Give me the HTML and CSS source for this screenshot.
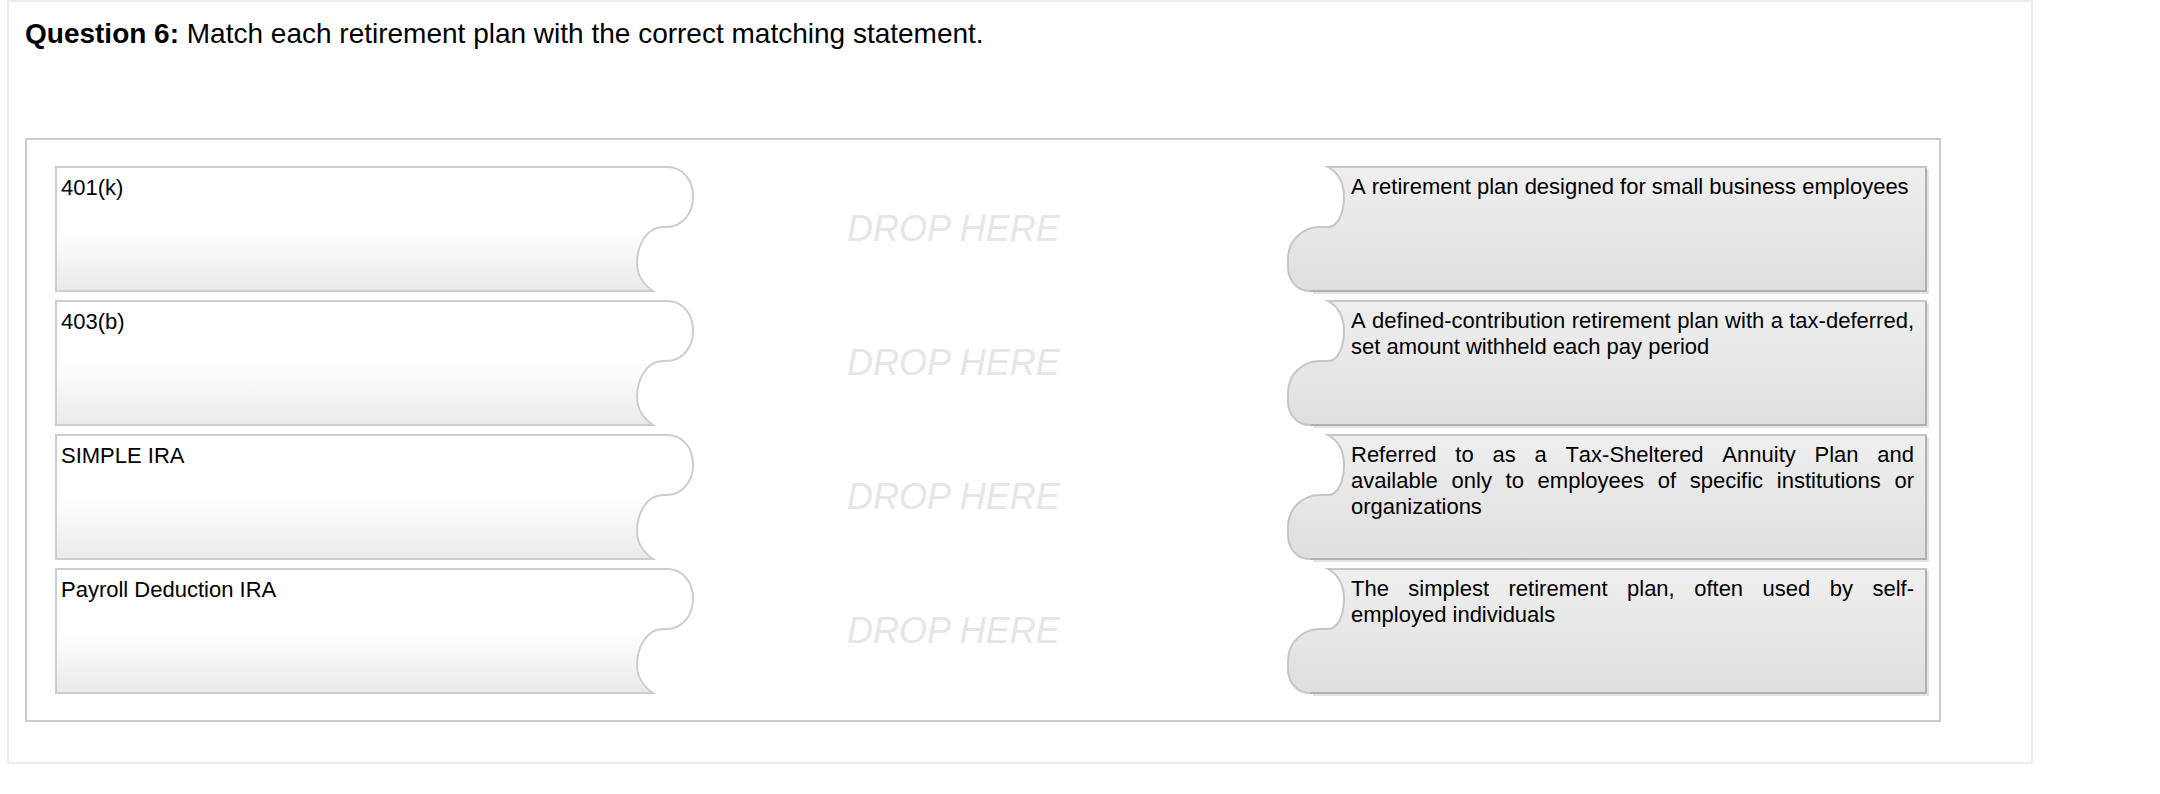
FILE: index.html
```html
<!DOCTYPE html>
<html>
<head>
<meta charset="utf-8">
<link rel="stylesheet" href="styles.css">
</head>
<body>
<div class="question">
  <div class="prompt"><b>Question 6:</b> Match each retirement plan with the correct matching statement.</div>
  <div class="board">
    <div class="row">
      <div class="piece piece-left">
        <svg class="shape" width="639" height="126" viewBox="0 0 639 126"><defs><linearGradient id="gl1" x1="0" y1="0" x2="0" y2="1"><stop offset="0" stop-color="#fff"/><stop offset="0.5" stop-color="#fff"/><stop offset="1" stop-color="#eaeaea"/></linearGradient></defs><path d="M1,1 H612 C628,1 638,14 638,31 C638,48 627,61 611,61 H608 C592,61 582,79 582,97 C582,109 589,119 598,125 H1 Z" fill="url(#gl1)" stroke="#cdcdcd" stroke-width="2"/></svg>
        <div class="label">401(k)</div>
      </div>
      <div class="drop">DROP HERE</div>
      <div class="piece piece-right">
        <svg class="shape" width="640" height="126" viewBox="0 0 640 126"><defs><linearGradient id="gr1" x1="0" y1="0" x2="0" y2="1"><stop offset="0" stop-color="#efefef"/><stop offset="1" stop-color="#dfdfdf"/></linearGradient></defs><path d="M41,1 H639 V125 H22 C10,125 1,114 1,101 V93 C1,75 15,61 33,61 H41 C51,61 57,47 57,31 C57,16 50,6 41,1 Z" fill="url(#gr1)" stroke="#c6c6c6" stroke-width="2"/><path d="M639,2 V125 H24" fill="none" stroke="#b0b0b0" stroke-width="2"/><path d="M26,127 H641 V3" fill="none" stroke="#dcdcdc" stroke-width="1.5"/></svg>
        <p class="text">A retirement plan designed for small business employees</p>
      </div>
    </div>
    <div class="row">
      <div class="piece piece-left">
        <svg class="shape" width="639" height="126" viewBox="0 0 639 126"><defs><linearGradient id="gl2" x1="0" y1="0" x2="0" y2="1"><stop offset="0" stop-color="#fff"/><stop offset="0.5" stop-color="#fff"/><stop offset="1" stop-color="#eaeaea"/></linearGradient></defs><path d="M1,1 H612 C628,1 638,14 638,31 C638,48 627,61 611,61 H608 C592,61 582,79 582,97 C582,109 589,119 598,125 H1 Z" fill="url(#gl2)" stroke="#cdcdcd" stroke-width="2"/></svg>
        <div class="label">403(b)</div>
      </div>
      <div class="drop">DROP HERE</div>
      <div class="piece piece-right">
        <svg class="shape" width="640" height="126" viewBox="0 0 640 126"><defs><linearGradient id="gr2" x1="0" y1="0" x2="0" y2="1"><stop offset="0" stop-color="#efefef"/><stop offset="1" stop-color="#dfdfdf"/></linearGradient></defs><path d="M41,1 H639 V125 H22 C10,125 1,114 1,101 V93 C1,75 15,61 33,61 H41 C51,61 57,47 57,31 C57,16 50,6 41,1 Z" fill="url(#gr2)" stroke="#c6c6c6" stroke-width="2"/><path d="M639,2 V125 H24" fill="none" stroke="#b0b0b0" stroke-width="2"/><path d="M26,127 H641 V3" fill="none" stroke="#dcdcdc" stroke-width="1.5"/></svg>
        <p class="text">A defined-contribution retirement plan with a tax-deferred, set amount withheld each pay period</p>
      </div>
    </div>
    <div class="row">
      <div class="piece piece-left">
        <svg class="shape" width="639" height="126" viewBox="0 0 639 126"><defs><linearGradient id="gl3" x1="0" y1="0" x2="0" y2="1"><stop offset="0" stop-color="#fff"/><stop offset="0.5" stop-color="#fff"/><stop offset="1" stop-color="#eaeaea"/></linearGradient></defs><path d="M1,1 H612 C628,1 638,14 638,31 C638,48 627,61 611,61 H608 C592,61 582,79 582,97 C582,109 589,119 598,125 H1 Z" fill="url(#gl3)" stroke="#cdcdcd" stroke-width="2"/></svg>
        <div class="label">SIMPLE IRA</div>
      </div>
      <div class="drop">DROP HERE</div>
      <div class="piece piece-right">
        <svg class="shape" width="640" height="126" viewBox="0 0 640 126"><defs><linearGradient id="gr3" x1="0" y1="0" x2="0" y2="1"><stop offset="0" stop-color="#efefef"/><stop offset="1" stop-color="#dfdfdf"/></linearGradient></defs><path d="M41,1 H639 V125 H22 C10,125 1,114 1,101 V93 C1,75 15,61 33,61 H41 C51,61 57,47 57,31 C57,16 50,6 41,1 Z" fill="url(#gr3)" stroke="#c6c6c6" stroke-width="2"/><path d="M639,2 V125 H24" fill="none" stroke="#b0b0b0" stroke-width="2"/><path d="M26,127 H641 V3" fill="none" stroke="#dcdcdc" stroke-width="1.5"/></svg>
        <p class="text">Referred to as a Tax-Sheltered Annuity Plan and available only to employees of specific institutions or organizations</p>
      </div>
    </div>
    <div class="row">
      <div class="piece piece-left">
        <svg class="shape" width="639" height="126" viewBox="0 0 639 126"><defs><linearGradient id="gl4" x1="0" y1="0" x2="0" y2="1"><stop offset="0" stop-color="#fff"/><stop offset="0.5" stop-color="#fff"/><stop offset="1" stop-color="#eaeaea"/></linearGradient></defs><path d="M1,1 H612 C628,1 638,14 638,31 C638,48 627,61 611,61 H608 C592,61 582,79 582,97 C582,109 589,119 598,125 H1 Z" fill="url(#gl4)" stroke="#cdcdcd" stroke-width="2"/></svg>
        <div class="label">Payroll Deduction IRA</div>
      </div>
      <div class="drop">DROP HERE</div>
      <div class="piece piece-right">
        <svg class="shape" width="640" height="126" viewBox="0 0 640 126"><defs><linearGradient id="gr4" x1="0" y1="0" x2="0" y2="1"><stop offset="0" stop-color="#efefef"/><stop offset="1" stop-color="#dfdfdf"/></linearGradient></defs><path d="M41,1 H639 V125 H22 C10,125 1,114 1,101 V93 C1,75 15,61 33,61 H41 C51,61 57,47 57,31 C57,16 50,6 41,1 Z" fill="url(#gr4)" stroke="#c6c6c6" stroke-width="2"/><path d="M639,2 V125 H24" fill="none" stroke="#b0b0b0" stroke-width="2"/><path d="M26,127 H641 V3" fill="none" stroke="#dcdcdc" stroke-width="1.5"/></svg>
        <p class="text">The simplest retirement plan, often used by self-employed individuals</p>
      </div>
    </div>
  </div>
</div>
</body>
</html>
```
FILE: styles.css
```css
html, body {
  margin: 0;
  padding: 0;
  background: #fff;
}
body {
  font-family: "Liberation Sans", Arial, sans-serif;
  color: #000;
}
.question {
  box-sizing: border-box;
  margin-left: 7px;
  width: 2026px;
  height: 764px;
  border: 2px solid #ededed;
  padding: 16px 16px 16px 16px;
}
.prompt {
  font-size: 28px;
  line-height: 32px;
}
.prompt b {
  font-weight: bold;
}
.board {
  box-sizing: border-box;
  margin-top: 88px;
  width: 1916px;
  border: 2px solid #cbcbcb;
  padding: 26px 12px 26px 28px;
  display: flex;
  flex-direction: column;
  gap: 8px;
}
.row {
  display: grid;
  grid-template-columns: 639px 1fr 640px;
  height: 126px;
}
.piece {
  display: grid;
  height: 126px;
}
.shape {
  grid-area: 1 / 1;
  display: block;
  overflow: visible;
}
.label,
.text {
  grid-area: 1 / 1;
  font-size: 22px;
  line-height: normal;
  margin: 0;
  align-self: start;
  font-kerning: none;
}
.label {
  padding: 9px 0 0 6px;
}
.text {
  padding: 8px 13px 0 64px;
  text-align: justify;
}
.drop {
  align-self: center;
  padding-left: 153px;
  font-size: 36px;
  font-style: italic;
  color: #e6e6e6;
  line-height: 1;
}
```
